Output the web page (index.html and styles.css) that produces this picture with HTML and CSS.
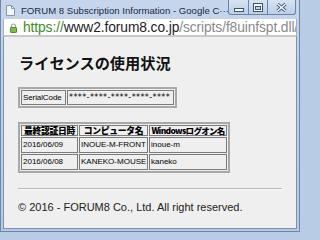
FILE: index.html
```html
<!DOCTYPE html>
<html lang="ja">
<head>
<meta charset="utf-8">
<title>FORUM 8 Subscription Information</title>
<link rel="stylesheet" href="styles.css">
</head>
<body>
<div class="window">
  <div class="titlebar">
    <svg class="page-icon" width="9" height="11" viewBox="0 0 9 11"><path d="M0.5 0.5h5l3 3v7h-8z" fill="#f4f6f9" stroke="#8a96a6"/><path d="M5.5 0.5v3h3" fill="none" stroke="#8a96a6"/></svg>
    <span class="title">FORUM 8 Subscription Information - Google C···</span>
    <div class="buttons">
      <div class="btn btn-min"><svg width="10" height="4" viewBox="0 0 10 4"><rect x="0.5" y="0.5" width="9" height="3" fill="#fff" stroke="#3b5273"/></svg></div>
      <div class="btn btn-max"><svg width="10" height="9" viewBox="0 0 10 9"><rect x="0.5" y="0.5" width="9" height="8" fill="#fff" stroke="#3b5273"/><rect x="2.5" y="3.5" width="5" height="3" fill="#c6d7ec" stroke="#3b5273"/></svg></div>
      <div class="btn btn-close"><svg width="11" height="9" viewBox="0 0 11 9"><path d="M1.5 1l8 7M9.5 1l-8 7" stroke="#3b5273" stroke-width="3.2"/><path d="M1.5 1l8 7M9.5 1l-8 7" stroke="#fff" stroke-width="1.4"/></svg></div>
    </div>
  </div>
  <div class="addressbar">
    <svg class="lock" width="7" height="10" viewBox="0 0 7 10"><path d="M1.5 5V3a2 2 0 0 1 4 0v2" fill="none" stroke="#9aa0a6" stroke-width="1.2"/><rect x="0.5" y="4.5" width="6" height="5" rx="0.6" fill="#7cc04a" stroke="#4f8f2b"/></svg>
    <span class="url"><span class="scheme">https://</span><span class="host">www2.forum8.co.jp</span><span class="path">/scripts/f8uinfspt.dll/</span></span>
  </div>
  <div class="content">
    <h1 class="heading">ライセンスの使用状況</h1>
    <table class="grid serial">
      <tr>
        <td class="label c-serial">SerialCode</td>
        <td class="stars c-value">****-****-****-****-****</td>
      </tr>
    </table>
    <table class="grid usage">
      <tr class="head">
        <th class="c1">最終認証日時</th>
        <th class="c2">コンピュータ名</th>
        <th class="c3">Windowsログオン名</th>
      </tr>
      <tr>
        <td class="date">2016/06/09</td>
        <td>INOUE-M-FRONT</td>
        <td>inoue-m</td>
      </tr>
      <tr>
        <td class="date">2016/06/08</td>
        <td>KANEKO-MOUSE</td>
        <td>kaneko</td>
      </tr>
    </table>
    <hr class="rule">
    <p class="footer">© 2016 - FORUM8 Co., Ltd. All right reserved.</p>
  </div>
</div>
</body>
</html>
```
FILE: styles.css
```css
* { box-sizing: border-box; }
html, body {
  margin: 0;
  padding: 0;
  width: 300px;
  height: 232px;
  overflow: hidden;
  background: #b9cce5;
}
.window {
  width: 300px;
  height: 232px;
  display: flex;
  flex-direction: column;
  background: linear-gradient(#c4d5ec, #b6cae4);
  padding: 0 2px 2px 2px;
  border: 1px solid #6f86a6;
  border-top: none;
}
.titlebar {
  height: 19px;
  display: flex;
  align-items: center;
  position: relative;
  padding-left: 3px;
}
.page-icon { margin-right: 6px; margin-top: 1px; flex: none; }
.title {
  font-family: "Liberation Sans", Arial, sans-serif;
  font-size: 9.6px;
  color: #1d2a3b;
  white-space: nowrap;
  margin-top: 1px;
}
.buttons {
  position: absolute;
  top: 0;
  right: 1px;
  display: flex;
  height: 15px;
}
.btn {
  height: 15px;
  display: flex;
  align-items: center;
  justify-content: center;
  background: linear-gradient(#d6e3f3, #bccfe7);
  border: 1px solid #6b83a5;
  border-top: none;
}
.btn-min { width: 21px; border-radius: 0 0 0 3px; padding-top: 5px; }
.btn-max { width: 19px; border-left: none; }
.btn-close { width: 28px; border-left: none; border-radius: 0 0 3px 0; }
.addressbar {
  height: 16px;
  background: #fff;
  display: flex;
  align-items: center;
  padding-left: 6px;
  overflow: hidden;
  border-left: 1px solid #9fb1c8;
  border-right: 1px solid #9fb1c8;
}
.lock { flex: none; margin-right: 6px; margin-top: 1px; }
.url {
  font-family: "Liberation Sans", Arial, sans-serif;
  font-size: 13.8px;
  white-space: nowrap;
  letter-spacing: -0.1px;
}
.scheme { color: #3d8d2a; }
.host { color: #222; }
.path { color: #8a8a8a; }
.content {
  flex: 1;
  background: #efefef;
  border-top: 2px solid #c9c9c9;
  border-left: 1px solid #7f91aa;
  border-right: 1px solid #7f91aa;
  border-bottom: 1px solid #7f91aa;
  padding: 0 14px;
  font-family: "Liberation Sans", Arial, "Noto Sans CJK JP", sans-serif;
}
.heading {
  margin: 16px 0 0 1px;
  font-family: "Noto Sans CJK JP", sans-serif;
  font-size: 15.2px;
  font-weight: bold;
  line-height: 18px;
  color: #111;
}
.grid {
  border-collapse: separate;
  border-spacing: 1px;
  border: 2px solid #a8a8a8;
  table-layout: fixed;
}
.grid td, .grid th {
  border: 1px solid #7b7b7b;
  padding: 0 1px;
  font-size: 8px;
  color: #000;
  white-space: nowrap;
  overflow: visible;
  text-align: left;
}
.serial { margin-top: 16px; width: 159px; }
.serial td { height: 15px; line-height: 13px; }
.c-serial { width: 45px; color: #2a1010; letter-spacing: -0.1px; }
.c-value { width: 107px; }
.stars {
  font-family: "DejaVu Sans", "Liberation Sans", sans-serif;
  font-size: 7.8px;
  letter-spacing: 0.4px;
}
.usage { margin-top: 14px; width: 210px; }
.usage th {
  font-family: "Noto Sans CJK JP", sans-serif;
  font-weight: 900;
  font-size: 8.8px;
  height: 11px;
  line-height: 9px;
  text-align: center;
  padding: 0;
  letter-spacing: -0.3px;
}
.usage th.c3 { letter-spacing: -0.7px; font-size: 8.5px; }
.usage td { height: 16px; line-height: 14px; }
.c1 { width: 57px; }
.c2 { width: 69px; }
.c3 { width: 78px; }
.usage .date { letter-spacing: 0; }
.rule {
  margin: 15px 0 0 0;
  border: none;
  border-top: 1px solid #b9b9b9;
  border-bottom: 1px solid #fafafa;
  height: 0;
}
.footer {
  margin: 11px 0 0 0;
  font-size: 11px;
  line-height: 13px;
  color: #222;
}
```
